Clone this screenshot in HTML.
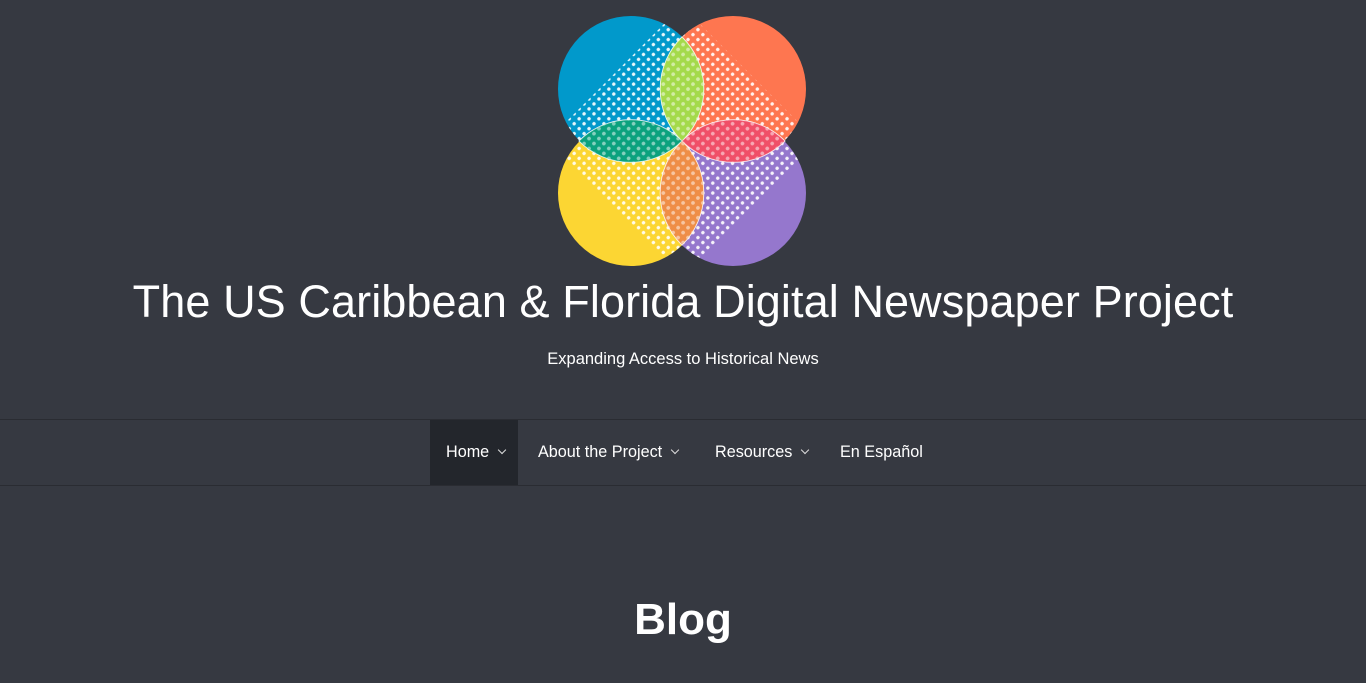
<!DOCTYPE html>
<html><head><meta charset="utf-8"><style>
body{margin:0;background:#363941;font-family:"Liberation Sans",Arial,sans-serif;color:#fff;width:1366px;height:683px;overflow:hidden;position:relative}
svg{position:absolute;left:0;top:0}
.t{position:absolute;left:0;width:1366px;text-align:center}
h1{margin:0;font-weight:400;font-size:45px;top:276px;letter-spacing:0.1px}
.sub{top:350px;font-size:16.5px}
nav{position:absolute;top:419px;left:0;width:1366px;height:65px;border-top:1px solid #2a2c32;border-bottom:1px solid #2a2c32}
nav a{position:absolute;top:0;height:65px;line-height:65px;font-size:16.2px;color:#fff}
.car{display:inline-block;width:5px;height:5px;border-right:1px solid #ddd;border-bottom:1px solid #ddd;transform:rotate(45deg);margin-left:10px;position:relative;top:-4px}
.blog{top:595px;font-size:44px;font-weight:700}
</style></head><body>
<svg width="1366" height="300">
<defs>
<pattern id="d" width="7" height="7" patternUnits="userSpaceOnUse" patternTransform="rotate(45)"><circle cx="3.5" cy="3.5" r="1.7" fill="#fff"/></pattern>
<clipPath id="dm"><polygon points="682,6 817,141 682,276 547,141"/></clipPath>
</defs>
<circle cx="631" cy="89" r="73" fill="#0199cb"/>
<circle cx="733" cy="89" r="73" fill="#fe7650"/>
<circle cx="631" cy="193" r="73" fill="#fcd633"/>
<circle cx="733" cy="193" r="73" fill="#9577cd"/>
<path d="M682,37 A73,73 0 0 1 682,141 A73,73 0 0 1 682,37Z" fill="#a5da4c" stroke="#fff"/>
<path d="M682,141 A73,73 0 0 1 682,245 A73,73 0 0 1 682,141Z" fill="#ef8e48" stroke="#fff"/>
<path d="M579,141 A73,73 0 0 1 682,141 A73,73 0 0 1 579,141Z" fill="#0ca27f" stroke="#fff"/>
<path d="M682,141 A73,73 0 0 1 785,141 A73,73 0 0 1 682,141Z" fill="#f04f68" stroke="#fff"/>
<g clip-path="url(#dm)">
<g opacity="0.9">
<circle cx="631" cy="89" r="73" fill="url(#d)"/><circle cx="733" cy="89" r="73" fill="url(#d)"/>
<circle cx="631" cy="193" r="73" fill="url(#d)"/><circle cx="733" cy="193" r="73" fill="url(#d)"/>
</g></g>
<path d="M682,37 A73,73 0 0 1 682,141 A73,73 0 0 1 682,37Z" fill="#a5da4c" opacity="0.45"/>
<path d="M682,141 A73,73 0 0 1 682,245 A73,73 0 0 1 682,141Z" fill="#ef8e48" opacity="0.45"/>
<path d="M579,141 A73,73 0 0 1 682,141 A73,73 0 0 1 579,141Z" fill="#0ca27f" opacity="0.45"/>
<path d="M682,141 A73,73 0 0 1 785,141 A73,73 0 0 1 682,141Z" fill="#f04f68" opacity="0.45"/>
</svg>
<h1 class="t">The US Caribbean &amp; Florida Digital Newspaper Project</h1>
<div class="t sub">Expanding Access to Historical News</div>
<nav>
<div style="position:absolute;left:430px;top:0;width:88px;height:65px;background:#23262c"></div>
<a style="left:446px">Home<span class="car"></span></a>
<a style="left:538px">About the Project<span class="car"></span></a>
<a style="left:715px">Resources<span class="car"></span></a>
<a style="left:840px">En Español</a>
</nav>
<div class="t blog">Blog</div>
</body></html>
